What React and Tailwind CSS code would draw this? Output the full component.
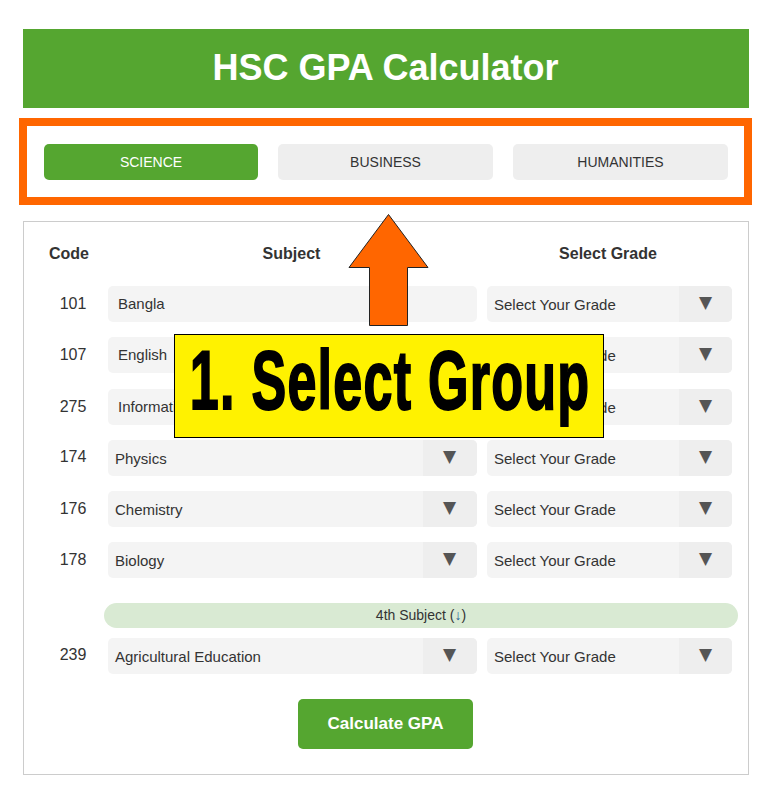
import React from "react";

const SelectBox = ({ label, className, arrowClass = "w-[53px]" }) => (
  <div className={`flex h-9 items-stretch rounded-[5px] bg-[#f4f4f4] overflow-hidden ${className}`}>
    <span className="flex-1 pl-[7px] pt-[10px] text-[15px] leading-[18px] text-[#333]">{label}</span>
    <span className={`flex justify-center bg-[#eeeeee] pt-[5px] text-[17px] leading-[22px] text-[#555] font-['DejaVu_Sans',sans-serif] ${arrowClass}`}>▼</span>
  </div>
);

const SubjectSelect = ({ label }) => (
  <SelectBox label={label} className="w-[369px]" arrowClass="w-[54px] pr-[1px]" />
);

const FixedBox = ({ label }) => (
  <div className="h-9 w-[369px] rounded-[5px] bg-[#f4f4f4] pl-[10px] pt-[9px] text-[15px] leading-[18px] text-[#333] whitespace-nowrap overflow-hidden">
    {label}
  </div>
);

const Row = ({ code, codeTop = "pt-[8.6px]", children }) => (
  <div className="flex items-start">
    <div className={`w-[84px] pl-[14px] text-center text-[16px] leading-[18px] text-[#333] ${codeTop}`}>{code}</div>
    {children}
    <SelectBox label="Select Your Grade" className="ml-[10px] w-[245px]" />
  </div>
);

export default function App() {
  return (
    <div className="relative h-[795px] w-[777px] overflow-hidden bg-white font-['Liberation_Sans',Arial,sans-serif]">
      <div className="mx-[23px] w-[726px] pt-[29px]">
        <h1 className="flex h-[79px] items-center justify-center bg-[#55a630] pb-[2px] pr-[1px] text-[36px] font-bold leading-none text-white">
          HSC GPA Calculator
        </h1>

        <div className="-ml-1 mt-[10px] flex h-[87px] w-[733px] gap-5 border-[8px] border-[#ff6600] pl-[17px] pt-[18px]">
          <button className="h-9 w-[214px] shrink-0 rounded-[5px] bg-[#55a630] text-[14px] text-white">SCIENCE</button>
          <button className="h-9 w-[215px] shrink-0 rounded-[5px] bg-[#eeeeee] text-[14px] text-[#333]">BUSINESS</button>
          <button className="h-9 w-[215px] shrink-0 rounded-[5px] bg-[#eeeeee] text-[14px] text-[#333]">HUMANITIES</button>
        </div>

        <div className="mt-4 h-[554px] border border-[#cccccc] pt-[22px]">
          <div className="flex h-[20px] text-[16px] font-bold leading-[20px] text-[#333]">
            <div className="w-[90px] pl-[25px]">Code</div>
            <div className="w-[355px] text-center">Subject</div>
            <div className="w-[278px] text-center">Select Grade</div>
          </div>

          <div className="mt-[22px] flex flex-col gap-[15.25px]">
            <Row code="101"><FixedBox label="Bangla" /></Row>
            <Row code="107"><FixedBox label="English" /></Row>
            <Row code="275" codeTop="pt-[9.5px]"><FixedBox label="Information and Communication Technology" /></Row>
            <Row code="174"><SubjectSelect label="Physics" /></Row>
            <Row code="176"><SubjectSelect label="Chemistry" /></Row>
            <Row code="178"><SubjectSelect label="Biology" /></Row>
          </div>

          <div className="ml-[80px] mt-[25px] flex h-[25px] w-[634px] items-center justify-center rounded-full bg-[#d9ead3] text-[14px] text-[#333]">
            4th Subject (<span className="text-[#2a6496]">↓</span>)
          </div>

          <div className="mt-[10px]">
            <Row code="239" codeTop="pt-[8px]"><SubjectSelect label="Agricultural Education" /></Row>
          </div>

          <div className="mt-[25px] flex justify-center">
            <button className="-ml-[1px] h-[50px] w-[175px] rounded-[5px] bg-[#55a630] pb-[2px] text-[17px] font-bold text-white">
              Calculate GPA
            </button>
          </div>
        </div>
      </div>

      <svg className="absolute left-[348px] top-[213px]" width="82" height="113" viewBox="348 213 82 113">
        <path d="M388.5 214.5 L428 267.5 L407.5 267.5 L407.5 325.5 L369.5 325.5 L369.5 267.5 L349 267.5 Z" fill="#ff6600" stroke="#222" strokeWidth="1" />
      </svg>

      <div className="absolute left-[174px] top-[334px] flex h-[104px] w-[430px] items-center justify-center border border-black bg-[#fff200] pb-[12px] pl-[2px]">
        <span className="inline-block origin-center scale-x-[0.62] whitespace-nowrap text-[84px] font-bold leading-none tracking-[2px] text-black [-webkit-text-stroke:2px_black]">
          1. Select Group
        </span>
      </div>
    </div>
  );
}
